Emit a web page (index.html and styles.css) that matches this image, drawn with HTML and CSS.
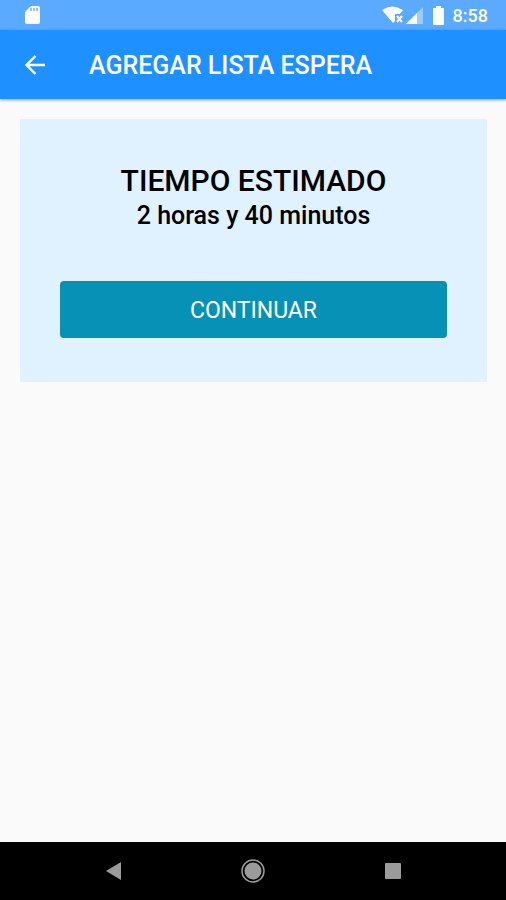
FILE: index.html
```html
<!DOCTYPE html>
<html lang="es">
<head>
    <meta charset="utf-8">
    <meta name="viewport" content="width=device-width, initial-scale=1">
    <title>Agregar lista espera</title>
    <link rel="stylesheet" href="styles.css">
</head>
<body>
    <div class="status-bar">
        <svg class="sd-card" width="15" height="20" viewBox="0 0 15 20">
            <path fill="#fff" d="M6 1h7q2 0 2 2v14q0 2-2 2H2q-2 0-2-2V7z"/>
            <path fill="#5aabff" fill-opacity="0.7" d="M5 3h2v3H5zM8 3h2v3H8zM11 3h2v3h-2z"/>
        </svg>
        <div class="status-icons">
            <svg width="22" height="18" viewBox="0 0 22 18">
                <path fill="#fff" d="M0 4Q10-3 21 4L18 8H13V15L11 17z"/>
                <path stroke="#fff" stroke-width="2" d="M15 10l5 6M20 10l-5 6"/>
            </svg>
            <svg width="17" height="17" viewBox="0 0 17 17">
                <path fill="#fff" fill-opacity="0.4" d="M17 0v17H0z"/>
                <path fill="#fff" d="M11 6v11H0z"/>
            </svg>
            <svg class="battery" width="11" height="19" viewBox="0 0 11 19">
                <path fill="#fff" d="M3 0h5v2h2q1 0 1 1v15q0 1-1 1H1q-1 0-1-1V3q0-1 1-1h2z"/>
            </svg>
            <span class="clock">8:58</span>
        </div>
    </div>

    <header class="toolbar">
        <button class="back-button" aria-label="Volver">
            <svg width="20" height="20" viewBox="0 0 20 20" fill="none" stroke="#fff" stroke-width="2.400">
                <path d="M20 10H2M10.500 1L1.500 10L10.500 19"/>
            </svg>
        </button>
        <h1>AGREGAR LISTA ESPERA</h1>
    </header>

    <main>
        <div class="card">
            <h2>TIEMPO ESTIMADO</h2>
            <p>2 horas y 40 minutos</p>
            <button class="continue-button">CONTINUAR</button>
        </div>
    </main>

    <nav class="nav-bar">
        <button aria-label="Atrás">
            <svg width="24" height="24" viewBox="0 0 24 24"><path fill="#9b9b9b" d="M20 3v18L5 12z"/></svg>
        </button>
        <button aria-label="Inicio">
            <svg width="24" height="24" viewBox="0 0 24 24">
                <circle cx="12" cy="12" r="11" fill="none" stroke="#9b9b9b" stroke-width="1.500"/>
                <circle cx="12" cy="12" r="8.500" fill="#9b9b9b"/>
            </svg>
        </button>
        <button aria-label="Recientes">
            <svg width="24" height="24" viewBox="0 0 24 24"><rect x="4" y="4" width="16" height="16" rx="1" fill="#9b9b9b"/></svg>
        </button>
    </nav>
</body>
</html>
```

FILE: styles.css
```css
* {
    box-sizing: border-box;
}

body {
    margin: 0;
    min-height: 100vh;
    display: flex;
    flex-direction: column;
    background-color: #fafafa;
    font-family: Roboto, "Liberation Sans", sans-serif;
}

button {
    padding: 0;
    border: none;
    background: none;
    font-family: inherit;
    cursor: pointer;
}

svg {
    display: block;
}

.status-bar {
    height: 30px;
    padding: 0 18px 0 25px;
    display: flex;
    justify-content: space-between;
    align-items: center;
    background-color: #5aabff;
}

.status-icons {
    display: flex;
    align-items: center;
    gap: 2px;
}

.battery {
    margin: 0 7px 0 8px;
}

.clock {
    color: white;
    font-size: 18px;
    font-weight: 500;
    line-height: 28px;
    padding-top: 2px;
}

.toolbar {
    height: 69px;
    padding: 0 25px;
    display: flex;
    align-items: center;
    gap: 44px;
    background-color: #1e90ff;
    box-shadow: 0 1px 3px rgba(0, 0, 0, 0.4);
}

.toolbar h1 {
    margin: 0;
    padding-top: 2px;
    color: white;
    font-size: 25px;
    font-weight: 500;
}

main {
    flex: 1;
    padding: 20px 19px 20px 20px;
}

.card {
    padding: 43px 40px 44px;
    background-color: #e0f1ff;
    color: black;
    text-align: center;
}

.card h2 {
    margin: 0;
    font-size: 30px;
    font-weight: 500;
    line-height: 38px;
}

.card p {
    margin: 0 0 49px;
    font-size: 25px;
    font-weight: 500;
    line-height: 32px;
}

.continue-button {
    display: block;
    width: 100%;
    height: 57px;
    padding-top: 2px;
    border-radius: 4px;
    background-color: #0891b6;
    color: white;
    font-size: 23px;
}

.nav-bar {
    height: 58px;
    padding: 0 43px;
    display: flex;
    justify-content: space-between;
    align-items: center;
    background-color: black;
}

.nav-bar button {
    flex: 1;
    display: flex;
    justify-content: center;
}
```
